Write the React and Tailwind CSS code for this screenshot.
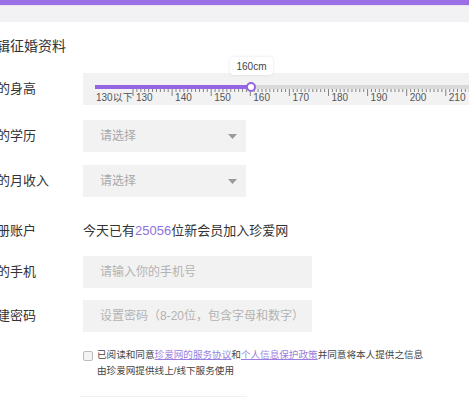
import React from "react";

const majors = [130, 140, 150, 160, 170, 180, 190, 200, 210];

const Ruler = () => {
  // ruler box starts at x=83, ticks in box coordinates
  const start = 50;
  const step = 39.1;
  const ticks = [];
  for (let i = 0; i < 90; i++) {
    const x = start + (step / 10) * i;
    const major = i % 10 === 0;
    ticks.push(
      <line
        key={i}
        x1={x}
        x2={x}
        y1={16}
        y2={major ? 23 : 19}
        stroke="#777"
        strokeWidth="0.9"
      />
    );
  }
  return (
    <div className="relative h-[32px] w-[420px] shrink-0 bg-[#f2f2f2]">
      <svg width="420" height="32" className="absolute left-0 top-0">
        <rect x="168" y="12" width="252" height="4" fill="#d9d9d9" />
        <rect x="12" y="12" width="156" height="4" fill="#9466e3" />
        {ticks}
        <text x="13" y="28" fontSize="10" fill="#555" fontFamily="Liberation Sans, Noto Sans CJK SC, sans-serif">
          130以下
        </text>
        {majors.map((m, i) => (
          <text
            key={m}
            x={start + step * i + 3}
            y="28"
            fontSize="10"
            fill="#555"
            fontFamily="Liberation Sans, sans-serif"
          >
            {m}
          </text>
        ))}
      </svg>
      {/* thumb */}
      <div className="absolute left-[163px] top-[9px] h-[10px] w-[10px] rounded-full border-2 border-[#9466e3] bg-white" />
      {/* tooltip */}
      <div className="absolute left-[147px] top-[-16px] flex h-[18px] w-[43px] items-center justify-center rounded-sm bg-white text-[10px] text-[#444] shadow-[0_0_3px_rgba(0,0,0,0.12)]">
        160cm
      </div>
    </div>
  );
};

const Caret = () => (
  <svg width="9" height="5" viewBox="0 0 9 5">
    <path d="M0 0 L9 0 L4.5 5 Z" fill="#9a9a9a" />
  </svg>
);

const Row = ({ label, children, className = "" }) => (
  <div className={`flex items-center ${className}`}>
    <div className="w-[99px] shrink-0 text-[13px] text-[#333]">{label}</div>
    {children}
  </div>
);

const Select = () => (
  <div className="flex h-[32px] w-[163px] items-center justify-between bg-[#f2f2f2] pl-[17px] pr-[9px] text-[12px] text-[#a8a8a8]">
    <span>请选择</span>
    <Caret />
  </div>
);

const Input = ({ placeholder }) => (
  <div className="flex h-[32px] w-[229px] items-center bg-[#f2f2f2] pl-[17px] text-[12px] text-[#b3b3b3]">
    {placeholder}
  </div>
);

export default function App() {
  return (
    <div className="h-[400px] w-[469px] overflow-hidden bg-white font-['Liberation_Sans','Noto_Sans_CJK_SC',sans-serif]">
      <div className="h-[5px] bg-[#9b6fe6]" />
      <div className="h-[17px] border-t border-[#e6e4ee] bg-[#f2f2f4]" />

      <div className="ml-[-16px]">
        <div className="ml-[-2px] mt-[14px] h-[20px] text-[14px] leading-[20px] text-[#333]">编辑征婚资料</div>

        <Row label="我的身高" className="mt-[17px]">
          <Ruler />
        </Row>

        <Row label="我的学历" className="mt-[15px]">
          <Select />
        </Row>

        <Row label="我的月收入" className="mt-[13px]">
          <Select />
        </Row>

        <Row label="注册账户" className="mt-[19px] h-[30px]">
          <div className="text-[13px] text-[#333]">
            今天已有<span className="text-[#8e72da]">25056</span>位新会员加入珍爱网
          </div>
        </Row>

        <Row label="我的手机" className="mt-[10px]">
          <Input placeholder="请输入你的手机号" />
        </Row>

        <Row label="创建密码" className="mt-[12px]">
          <Input placeholder="设置密码（8-20位，包含字母和数字）" />
        </Row>

        <div className="mt-[15px] flex pl-[99px]">
          <div className="mt-[4px] h-[10px] w-[10px] shrink-0 rounded-[2px] border border-[#bdbdbd] bg-[#f4f4f4]" />
          <div className="ml-[4px] text-[9.6px] leading-[16px] text-[#444]">
            已阅读和同意<span className="text-[#9b7fe0] underline">珍爱网的服务协议</span>和
            <span className="text-[#9b7fe0] underline">个人信息保护政策</span>并同意将本人提供之信息
            <br />
            由珍爱网提供线上/线下服务使用
          </div>
        </div>

        <div className="ml-[96px] mt-[17px] h-[6px] w-[167px] border-t border-[#f0f0f0]" />
      </div>
    </div>
  );
}
